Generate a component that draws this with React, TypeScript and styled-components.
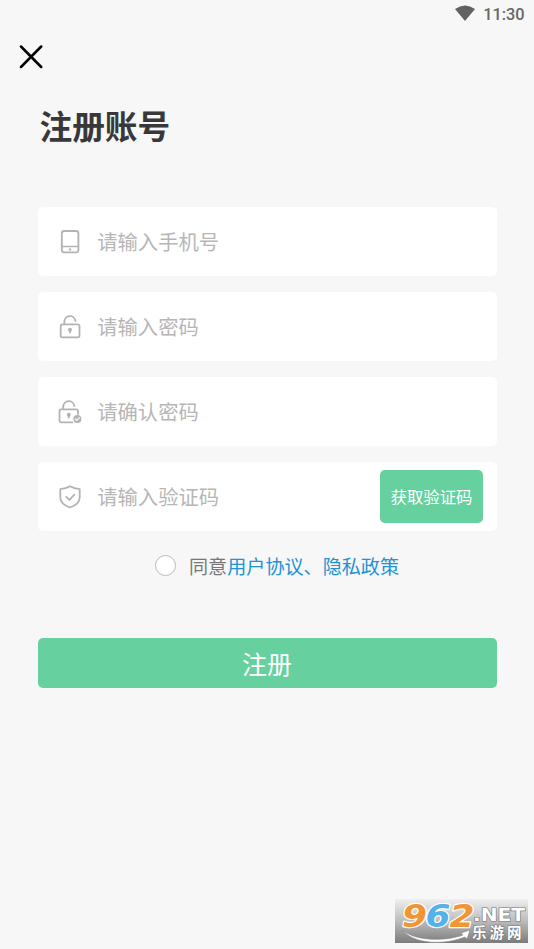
import React from "react";
import styled, { createGlobalStyle } from "styled-components";

const GlobalStyle = createGlobalStyle`
  * { box-sizing: border-box; }
  body {
    margin: 0;
    background: #f7f7f7;
    font-family: "Noto Sans CJK SC", sans-serif;
  }
  button, input { font-family: inherit; }
`;

const Screen = styled.div`
  position: relative;
  display: flex;
  flex-direction: column;
  width: 534px;
  height: 949px;
  overflow: hidden;
  background: #f7f7f7;
`;

const StatusBar = styled.header`
  display: flex;
  align-items: center;
  justify-content: flex-end;
  gap: 8px;
  height: 28px;
  padding: 1px 9.5px 0 0;
  color: #666;
  font: 500 16.3px/28px Roboto, sans-serif;
`;

const WifiIcon = styled.svg`
  width: 20px;
  height: 16px;
  margin-top: -3px;
`;

const CloseButton = styled.button`
  display: block;
  width: 24px;
  height: 24px;
  margin: 17px 0 0 19px;
  padding: 0;
  border: 0;
  background: none;

  svg { display: block; }
`;

const Title = styled.h1`
  height: 48px;
  margin: 32px 0 0 39.5px;
  color: #38383b;
  font-size: 32.7px;
  font-weight: 700;
  line-height: 48px;
`;

const Form = styled.form`
  display: flex;
  flex-direction: column;
  margin: 58px 37.5px 0;
`;

const Fields = styled.div`
  display: flex;
  flex-direction: column;
  gap: 16.4px;
`;

const Field = styled.label`
  display: flex;
  align-items: center;
  height: 68.6px;
  padding: 0 13.5px 0 19.5px;
  border-radius: 5px;
  background: #fff;
`;

const FieldIcon = styled.svg`
  flex: none;
  width: 26px;
  height: 26px;
  margin: 1px 14.7px 0 -0.4px;
  color: #b3b3b3;
  fill: none;
  stroke: currentColor;
  stroke-width: 1.8;
  stroke-linecap: round;
  stroke-linejoin: round;
`;

const Input = styled.input`
  flex: 1;
  min-width: 0;
  height: 40px;
  padding: 0;
  border: 0;
  outline: 0;
  background: none;
  color: #333;
  font-size: 20.3px;

  &::placeholder { color: #b6b6b6; opacity: 1; }
`;

const CodeButton = styled.button`
  flex: none;
  width: 103px;
  height: 53px;
  padding: 0;
  border: 0;
  border-radius: 5px;
  background: #66d09e;
  color: #fff;
  font-size: 16.4px;
`;

const Agreement = styled.div`
  display: flex;
  align-items: center;
  height: 30px;
  margin: 20px 0 0 117px;
  color: #777;
  font-size: 19.1px;
  line-height: 30px;
`;

const Radio = styled.span`
  width: 21px;
  height: 21px;
  margin-right: 13.5px;
  border: 1px solid #b9b9b9;
  border-radius: 50%;
  background: #fff;
`;

const Link = styled.span`
  color: #2292d2;
`;

const SubmitButton = styled.button`
  height: 50px;
  margin-top: 57px;
  padding: 1px 0 0;
  border: 0;
  border-radius: 5px;
  background: #66d09e;
  color: #fff;
  font-size: 25px;
  line-height: 49px;
`;

const Watermark = styled.svg`
  position: absolute;
  right: 6px;
  bottom: 6px;
  width: 133px;
  height: 44px;
  overflow: visible;
`;

const PhoneIcon = () => (
  <FieldIcon viewBox="0 0 26 26">
    <rect x="4.8" y="2" width="16.6" height="21.4" rx="2.4" />
    <path d="M5 17.5h16" strokeWidth="1.3" />
    <circle cx="13" cy="20.4" r="1.2" fill="currentColor" stroke="none" />
  </FieldIcon>
);

const LockIcon = () => (
  <FieldIcon viewBox="0 0 26 26">
    <rect x="3.7" y="10.3" width="18.8" height="13.1" rx="1.8" />
    <path d="M7.3 10.2V8.4c0-8.1 10.3-8.1 11.2-1.2" />
    <circle cx="13" cy="15.8" r="2" fill="currentColor" stroke="none" />
    <path d="M13 16v2.6" />
  </FieldIcon>
);

const LockCheckIcon = () => (
  <FieldIcon viewBox="0 0 26 26">
    <path d="M21 15v-2.9a1.8 1.8 0 0 0-1.8-1.8H4.3a1.8 1.8 0 0 0-1.8 1.8v9.5a1.8 1.8 0 0 0 1.8 1.8h11.2" />
    <path d="M6.2 10.2V8.4c0-8.1 10.3-8.1 11.2-1.2" />
    <circle cx="11.8" cy="15.8" r="2" fill="currentColor" stroke="none" />
    <path d="M11.8 16v2.6" />
    <circle cx="20.4" cy="19.9" r="4" fill="currentColor" stroke="none" />
    <path d="M18.3 19.9l1.5 1.5 2.7-2.7" stroke="#fff" strokeWidth="1.1" />
  </FieldIcon>
);

const ShieldIcon = () => (
  <FieldIcon viewBox="0 0 26 26">
    <path d="M13 2.2c3 1.8 6 2.6 9.7 2.9v8.4c0 4.8-4.5 8.2-9.7 10-5.2-1.8-9.7-5.2-9.7-10V5.1c3.7-.3 6.7-1.1 9.7-2.9z" />
    <path d="M9.3 12.8l3.1 3.1 5-5.3" />
  </FieldIcon>
);

export default function App() {
  return (
    <>
      <GlobalStyle />
      <Screen>
        <StatusBar>
          <WifiIcon viewBox="0 0 20 16">
            <path d="M0 4Q10-3 20 4L10 16z" fill="#626262" />
          </WifiIcon>
          <span>11:30</span>
        </StatusBar>
        <CloseButton type="button" aria-label="关闭">
          <svg width="24" height="24" viewBox="0 0 24 24" stroke="#000" strokeWidth="2.5" strokeLinecap="round">
            <path d="M2 1.5L22.2 22M22.2 1.5L2 22" />
          </svg>
        </CloseButton>
        <Title>注册账号</Title>
        <Form>
          <Fields>
            <Field><PhoneIcon /><Input type="tel" placeholder="请输入手机号" /></Field>
            <Field><LockIcon /><Input type="password" placeholder="请输入密码" /></Field>
            <Field><LockCheckIcon /><Input type="password" placeholder="请确认密码" /></Field>
            <Field>
              <ShieldIcon />
              <Input placeholder="请输入验证码" />
              <CodeButton type="button">获取验证码</CodeButton>
            </Field>
          </Fields>
          <Agreement>
            <Radio role="radio" aria-checked="false" />
            <span>同意</span><Link>用户协议、隐私政策</Link>
          </Agreement>
          <SubmitButton type="button">注册</SubmitButton>
        </Form>
        <Watermark viewBox="0 0 133 44">
          <defs>
            <linearGradient id="plate" x1="0" y1="0" x2="0" y2="1">
              <stop offset="0" stopColor="#efefef" />
              <stop offset=".5" stopColor="#bcbcbc" />
              <stop offset="1" stopColor="#7c7c7c" />
            </linearGradient>
          </defs>
          <rect width="133" height="44" fill="url(#plate)" />
          <g
            fontFamily="DejaVu Sans, sans-serif"
            fontWeight="700"
            fontStyle="italic"
            fontSize="32"
            stroke="#fff"
            strokeWidth="2.4"
            strokeLinejoin="round"
            paintOrder="stroke"
          >
            <text x="7" y="27.5" fill="#f29535" textLength="25" lengthAdjust="spacingAndGlyphs">9</text>
            <text x="30.5" y="27.5" fill="#55b1e8" textLength="25" lengthAdjust="spacingAndGlyphs">6</text>
            <text x="54.5" y="27.5" fill="#f29535" textLength="25" lengthAdjust="spacingAndGlyphs">2</text>
          </g>
          <path d="M7 31C22 43 52 42 68 36L66 34L75 31L72 40L70 38C50 46 20 46 7 31z" fill="#fff" stroke="#888" strokeWidth=".6" />
          <g fill="#fff" stroke="#777" strokeWidth="1.2" paintOrder="stroke">
            <text x="78" y="21.5" fontFamily="DejaVu Sans, sans-serif" fontWeight="700" fontSize="17" textLength="52" lengthAdjust="spacingAndGlyphs">.NET</text>
            <text x="77" y="39" fontFamily="Noto Sans CJK SC, sans-serif" fontWeight="700" fontSize="14.5" letterSpacing="3">乐游网</text>
          </g>
        </Watermark>
      </Screen>
    </>
  );
}
